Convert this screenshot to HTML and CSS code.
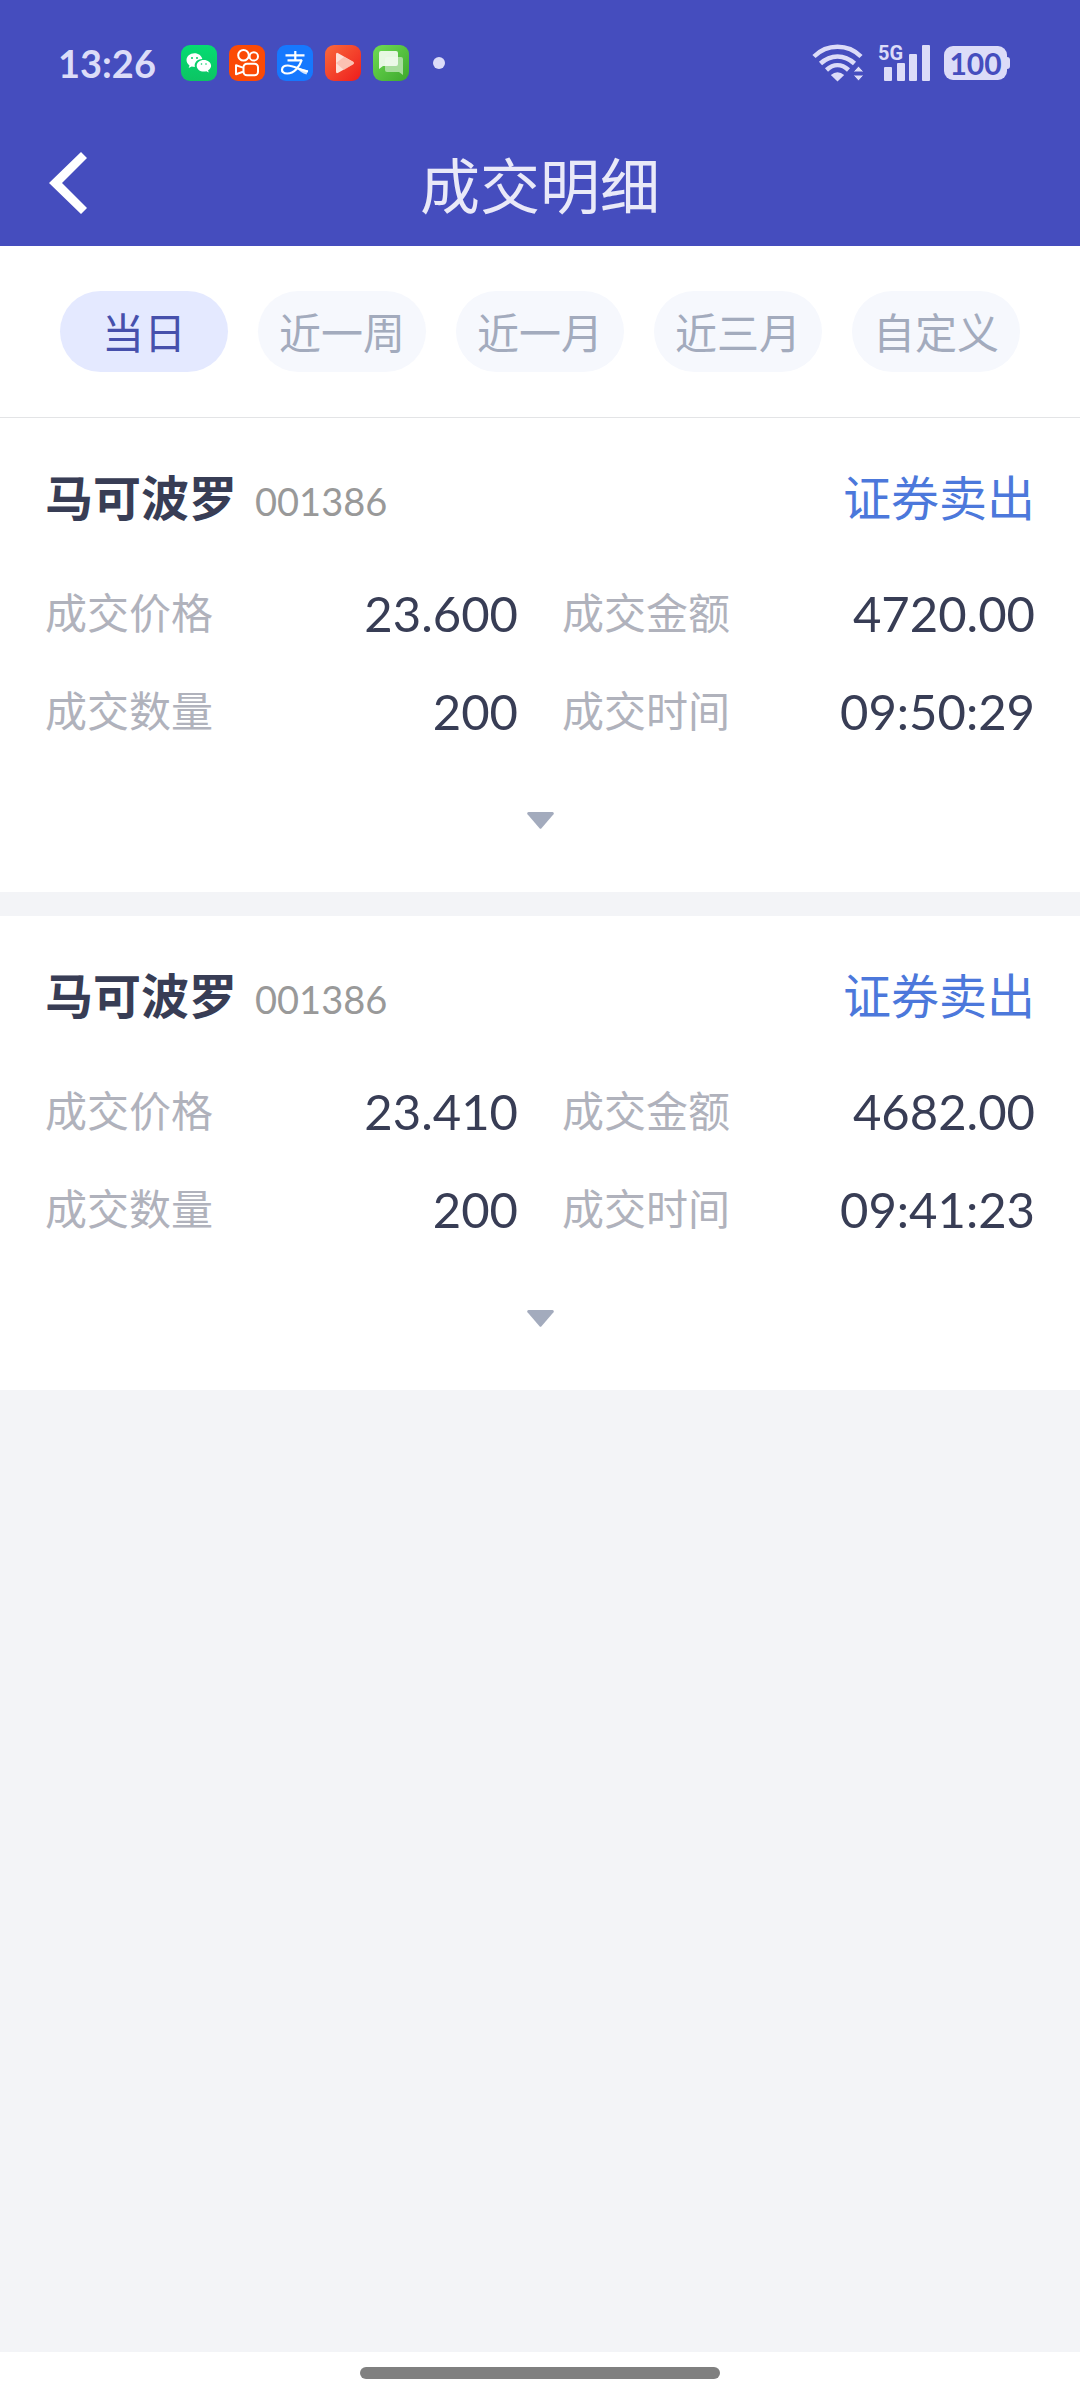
FILE: index.html
```html
<!DOCTYPE html>
<html lang="zh-CN">
<head>
<meta charset="utf-8">
<meta name="viewport" content="width=device-width, initial-scale=1">
<title>成交明细</title>
<link rel="stylesheet" href="styles.css">
</head>
<body>
<header class="header">
  <div class="status">
    <time class="clock">13:26</time>
    <div class="apps">
      <svg class="app" viewBox="0 0 36 36" aria-hidden="true">
        <defs><linearGradient id="wx" x2="0" y2="1"><stop stop-color="#05dc72"/><stop offset="1" stop-color="#0cc463"/></linearGradient></defs>
        <rect width="36" height="36" rx="9" fill="url(#wx)"/>
        <path d="M13.500 8.300c-4.500 0-8 3-8 6.800 0 2.200 1.100 4 3 5.300l-.8 2.600 3-1.500c1 .3 1.900.4 3.200.4a6.500 6.500 0 0 1-.2-1.500c0-3.600 3.300-6.400 7.600-6.400-.7-3.300-3.900-5.700-7.800-5.700z" fill="#fff"/>
        <path d="M22.800 14.900c-4 0-7.100 2.600-7.100 5.800s3.100 5.900 7.100 5.900c.9 0 1.700-.1 2.500-.4l2.400 1.300-.6-2.200c1.800-1.100 3-2.700 3-4.600 0-3.200-3.300-5.800-7.300-5.800z" fill="#fff"/>
        <g fill="#07cf6a"><circle cx="11" cy="13" r="1"/><circle cx="16" cy="13" r="1"/><circle cx="20.500" cy="19" r=".8"/><circle cx="25" cy="19" r=".8"/></g>
      </svg>
      <svg class="app" viewBox="0 0 36 36" aria-hidden="true">
        <rect width="36" height="36" rx="9" fill="#fb4a06"/>
        <g fill="none" stroke="#fff" stroke-width="2" stroke-linejoin="round">
          <circle cx="14.500" cy="10.300" r="5.300"/><circle cx="24.800" cy="11.400" r="4.200"/>
          <rect x="14.500" y="18.800" width="14.500" height="11.400" rx="3.500"/>
          <path d="M14 22.600l-7-2.400v9l7-2.400"/>
        </g>
      </svg>
      <svg class="app" viewBox="0 0 36 36" aria-hidden="true">
        <rect width="36" height="36" rx="9" fill="#1678fe"/>
        <g fill="none" stroke="#fff" stroke-width="2.200">
          <path d="M18.300 6v9M8.500 10.300h19M10.500 15.300h14.600"/>
          <path d="M24.700 15c-2 6.500-7.500 13.500-14.500 13.500-7.500 0-6.500-8 .5-8 6 0 12 4.500 20.300 6"/>
        </g>
        <path d="M19 22.500l12 3-1.500 4c-4-1-7-3.500-10.500-7z" fill="#fff" opacity=".8"/>
      </svg>
      <svg class="app" viewBox="0 0 36 36" aria-hidden="true">
        <defs><linearGradient id="pl" x2="1" y2="1"><stop stop-color="#f96a3c"/><stop offset="1" stop-color="#ee1c1c"/></linearGradient></defs>
        <rect width="36" height="36" rx="9" fill="url(#pl)"/>
        <path d="M11 9.500q0-2.500 2.200-1.300l15 8.600q1.600 1.200 0 2.400l-15 8.600q-2.200 1.200-2.200-1.300z" fill="#fde0d6"/>
        <path d="M11 18l8-6 9.500 5q1.200 1 0 2l-9.500 6z" fill="#f9b4a4" opacity=".7"/>
      </svg>
      <svg class="app" viewBox="0 0 36 36" aria-hidden="true">
        <defs><linearGradient id="ms" x2="1" y2="1"><stop stop-color="#6fdc54"/><stop offset="1" stop-color="#3da82c"/></linearGradient></defs>
        <rect width="36" height="36" rx="9" fill="url(#ms)"/>
        <path d="M14 12h14q2 0 2 2v16l-4-3H14q-2 0-2-2V14q0-2 2-2z" fill="#a7dd9c"/>
        <path d="M8 6h15q2 0 2 2v11q0 2-2 2H10l-4 3V8q0-2 2-2z" fill="#f1fbee" opacity=".93"/>
      </svg>
      <span class="dot"></span>
    </div>
    <div class="signals">
      <svg class="wifi" viewBox="0 0 52 38" aria-hidden="true">
        <g fill="none" stroke="#dcdcf8" stroke-width="4.500">
          <path d="M2 12.500c13-13 34-13 47 0"/><path d="M8.500 19.500c10-9.500 24-9.500 34 0"/><path d="M14.500 26c7-6.500 15-6.500 22 0"/>
        </g>
        <path d="M18.800 31q6.700-5.500 13.400 0l-6.700 6.500z" fill="#dcdcf8"/>
        <path d="M41 28l5.500-6 5.500 6zM41 31h11l-5.500 6z" fill="#dcdcf8" stroke="#454dbe" stroke-width="1"/>
      </svg>
      <div class="cell">
        <span class="net">5G</span>
        <svg class="bars" viewBox="0 0 46 36" aria-hidden="true"><g fill="#dcdcf8"><rect y="22" width="8" height="14" rx="1"/><rect x="13" y="18" width="8" height="18" rx="1"/><rect x="25" y="9" width="8" height="27" rx="1"/><rect x="38" width="8" height="36" rx="1"/></g></svg>
      </div>
      <span class="battery">100</span>
    </div>
  </div>
  <nav class="nav">
    <button class="back" type="button" aria-label="返回">
      <svg class="chevron" viewBox="0 0 38 62" aria-hidden="true"><path d="M32 0l6 6-25 25 25 25-6 6L0 31z" fill="#fff"/></svg>
    </button>
    <h1 class="title">成交明细</h1>
  </nav>
</header>

<div class="tabs">
  <button class="tab tab-active" type="button">当日</button>
  <button class="tab" type="button">近一周</button>
  <button class="tab" type="button">近一月</button>
  <button class="tab" type="button">近三月</button>
  <button class="tab" type="button">自定义</button>
</div>

<main class="list">
  <article class="card">
    <div class="head">
      <h2 class="name">马可波罗</h2><span class="code">001386</span><span class="side">证券卖出</span>
    </div>
    <dl class="fields">
      <div class="field"><dt>成交价格</dt><dd>23.600</dd></div>
      <div class="field"><dt>成交金额</dt><dd>4720.00</dd></div>
      <div class="field"><dt>成交数量</dt><dd>200</dd></div>
      <div class="field"><dt>成交时间</dt><dd>09:50:29</dd></div>
    </dl>
    <button class="more" type="button" aria-label="展开"><svg class="arrow" viewBox="0 0 27 17" aria-hidden="true"><path d="M1.500 0h24q2 .5 1 2.200L14.500 16.200q-1 1-2 0L.5 2.200Q-.5.5 1.500 0z" fill="#a3abbd"/></svg></button>
  </article>
  <article class="card">
    <div class="head">
      <h2 class="name">马可波罗</h2><span class="code">001386</span><span class="side">证券卖出</span>
    </div>
    <dl class="fields">
      <div class="field"><dt>成交价格</dt><dd>23.410</dd></div>
      <div class="field"><dt>成交金额</dt><dd>4682.00</dd></div>
      <div class="field"><dt>成交数量</dt><dd>200</dd></div>
      <div class="field"><dt>成交时间</dt><dd>09:41:23</dd></div>
    </dl>
    <button class="more" type="button" aria-label="展开"><svg class="arrow" viewBox="0 0 27 17" aria-hidden="true"><path d="M1.500 0h24q2 .5 1 2.200L14.500 16.200q-1 1-2 0L.5 2.200Q-.5.5 1.500 0z" fill="#a3abbd"/></svg></button>
  </article>
</main>

<footer class="gesture"><span class="handle"></span></footer>
</body>
</html>
```
FILE: styles.css
```css
* {
  box-sizing: border-box;
}

body {
  margin: 0;
  min-height: 100vh;
  display: flex;
  flex-direction: column;
  background: #f3f4f7;
  color: #383d55;
  font-family: Lato, "Noto Sans CJK SC", sans-serif;
}

button {
  border: 0;
  padding: 0;
  background: none;
  font: inherit;
}

h1, h2, dl, dd {
  margin: 0;
}

svg {
  display: block;
}

/* Header */
.header {
  background: #454dbe;
}

.status {
  display: flex;
  align-items: center;
  height: 126px;
  padding: 0 73px 0 58px;
  color: #dcdcf8;
}

.clock {
  width: 123px;
  font-size: 38px;
  font-weight: 700;
  line-height: 48px;
}

.apps {
  display: flex;
  align-items: center;
  gap: 12px;
}

.app {
  width: 36px;
  height: 36px;
}

.dot {
  width: 12px;
  height: 12px;
  margin-left: 12px;
  border-radius: 50%;
  background: #dcdcf8;
}

.signals {
  display: flex;
  align-items: center;
  gap: 14px;
  margin-left: auto;
}

.wifi {
  width: 52px;
  height: 38px;
}

.cell {
  position: relative;
  padding-left: 6px;
}

.net {
  position: absolute;
  left: 0;
  top: -2px;
  font: 700 20px/20px Roboto, sans-serif;
}

.bars {
  width: 46px;
  height: 36px;
}

.battery {
  position: relative;
  width: 63px;
  height: 34px;
  border-radius: 9px;
  background: #dcdcf8;
  color: #454dbe;
  font-size: 30px;
  font-weight: 700;
  line-height: 34px;
  text-align: center;
}

.battery::after {
  content: "";
  position: absolute;
  left: 100%;
  top: 11px;
  width: 3px;
  height: 12px;
  border-radius: 0 3px 3px 0;
  background: #dcdcf8;
}

.nav {
  display: grid;
  grid-template-columns: 120px 1fr 120px;
  align-items: center;
  height: 120px;
}

.back {
  padding: 0 0 6px 49px;
}

.chevron {
  width: 38px;
  height: 62px;
}

.title {
  color: #e9e9f8;
  font-size: 60px;
  font-weight: 400;
  line-height: 72px;
  text-align: center;
}

/* Date range */
.tabs {
  display: flex;
  gap: 30px;
  padding: 45px 60px;
  border-bottom: 1px solid #e3e4e6;
  background: #fff;
}

.tab {
  flex: 1;
  height: 81px;
  padding-top: 3px;
  border-radius: 41px;
  background: #f6f8fd;
  color: #a3abbd;
  font-size: 42px;
  line-height: 60px;
}

.tab-active {
  background: #e4e9ff;
  color: #4650ac;
}

/* Trades */
.list {
  flex: 1;
  display: flex;
  flex-direction: column;
  gap: 24px;
}

.card {
  display: flex;
  flex-direction: column;
  padding: 50px 45px 42px;
  background: #fff;
}

.head {
  display: flex;
  align-items: baseline;
  height: 60px;
  line-height: 60px;
}

.name {
  font-size: 48px;
}

.code {
  margin-left: 18px;
  color: #999;
  font-size: 38px;
}

.side {
  margin-left: auto;
  color: #4c78db;
  font-size: 48px;
}

.fields {
  display: grid;
  grid-template-columns: 1fr 1fr;
  grid-auto-rows: 60px;
  gap: 38px 44px;
  margin: 55px 0 49px;
}

.field {
  display: flex;
  align-items: center;
  justify-content: space-between;
  line-height: 60px;
}

.field dt {
  color: #b0b2bc;
  font-size: 42px;
}

.field dd {
  font-size: 49px;
}

.more {
  align-self: center;
  display: grid;
  place-items: center;
  width: 120px;
  height: 60px;
}

.arrow {
  width: 27px;
  height: 17px;
}

/* System gesture area */
.gesture {
  display: flex;
  justify-content: center;
  padding: 15px 0 21px;
  background: #fff;
}

.handle {
  width: 360px;
  height: 12px;
  border-radius: 6px;
  background: #808080;
}
```
